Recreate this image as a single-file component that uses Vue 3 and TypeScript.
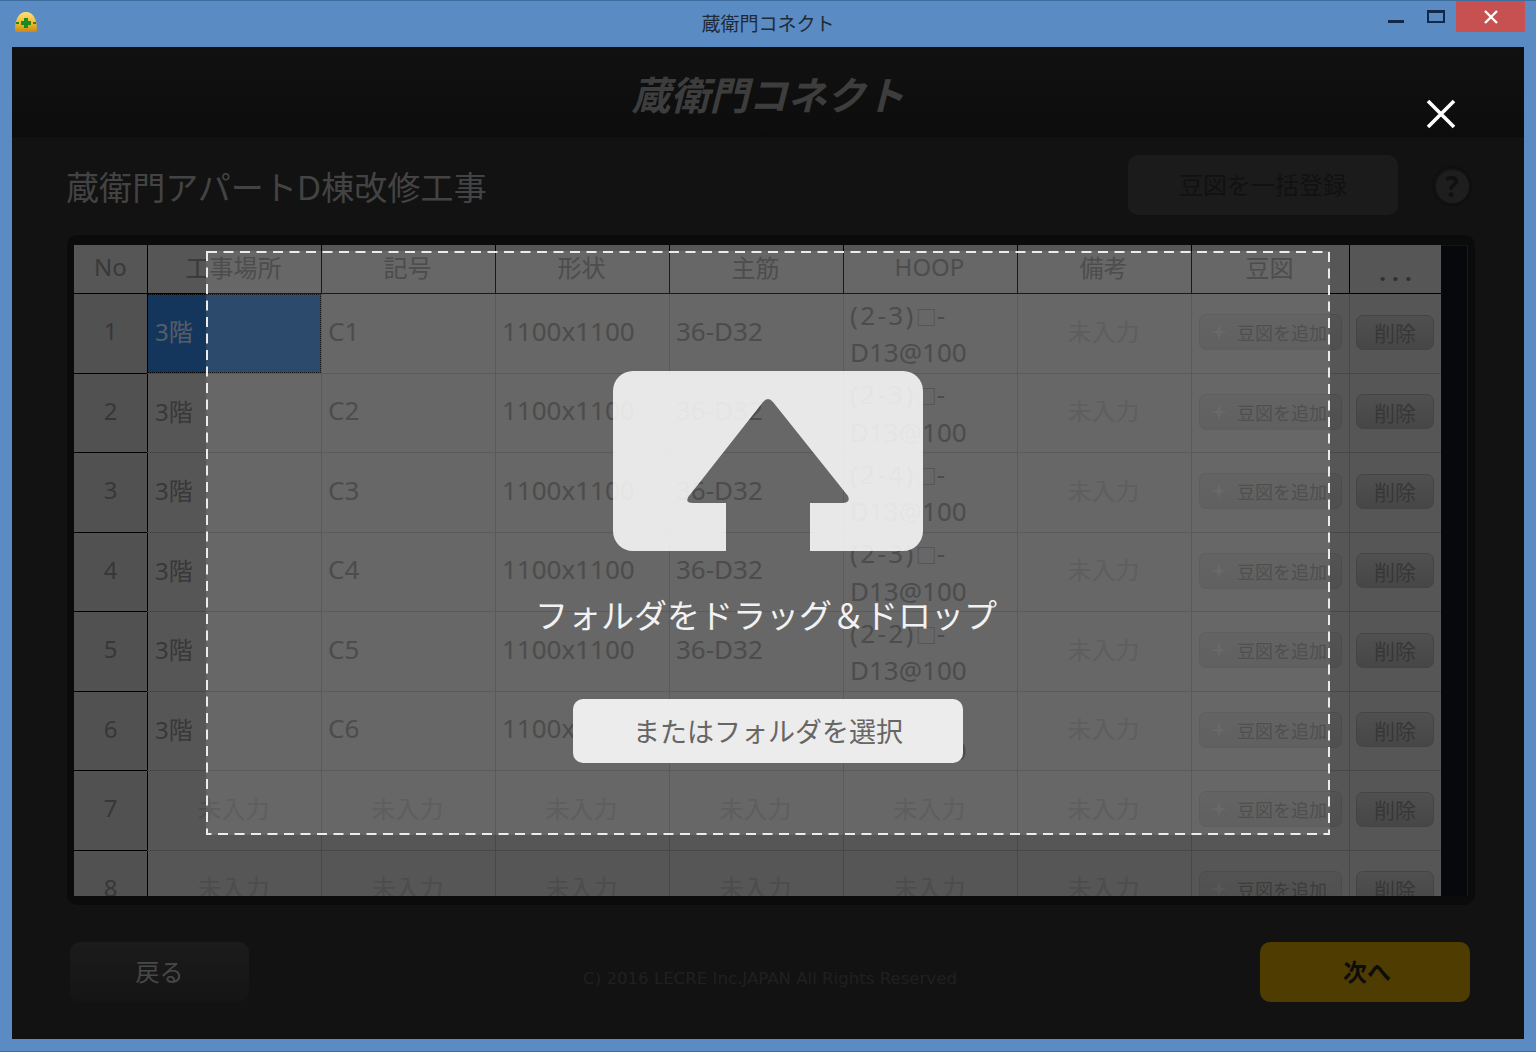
<script setup lang="ts">
interface Row {
  no: number
  place: string
  mark: string
  shape: string
  bar: string
  hoop: string
  tie: string
}

const headers: string[] = ['No', '工事場所', '記号', '形状', '主筋', 'HOOP', '備考', '豆図', '. . .']

const rows: Row[] = [
  { no: 1, place: '3階', mark: 'C1', shape: '1100x1100', bar: '36-D32', hoop: '(2-3)', tie: 'D13@100' },
  { no: 2, place: '3階', mark: 'C2', shape: '1100x1100', bar: '36-D32', hoop: '(2-3)', tie: 'D13@100' },
  { no: 3, place: '3階', mark: 'C3', shape: '1100x1100', bar: '36-D32', hoop: '(2-4)', tie: 'D13@100' },
  { no: 4, place: '3階', mark: 'C4', shape: '1100x1100', bar: '36-D32', hoop: '(2-3)', tie: 'D13@100' },
  { no: 5, place: '3階', mark: 'C5', shape: '1100x1100', bar: '36-D32', hoop: '(2-2)', tie: 'D13@100' },
  { no: 6, place: '3階', mark: 'C6', shape: '1100x1100', bar: '36-D32', hoop: '(2-2)', tie: 'D13@100' },
  { no: 7, place: '', mark: '', shape: '', bar: '', hoop: '', tie: '' },
  { no: 8, place: '', mark: '', shape: '', bar: '', hoop: '', tie: '' },
]
</script>

<template>
  <div class="window">
    <header class="titlebar">
      <svg class="helmet" width="24" height="22" viewBox="0 0 24 22">
        <defs>
          <linearGradient id="hat" x1="0" y1="0" x2="0" y2="1">
            <stop offset="0" stop-color="#ffe27a" />
            <stop offset="0.55" stop-color="#f4b92c" />
            <stop offset="1" stop-color="#c98a12" />
          </linearGradient>
        </defs>
        <path d="M1 19 C1 8 5 1 12 1 C19 1 23 8 23 19 Q23 21 21 21 H3 Q1 21 1 19 Z" fill="url(#hat)" />
        <path d="M10 7 H14 V10 H17 V14 H14 V17 H10 V14 H7 V10 H10 Z" fill="#1d8a1d" />
        <rect x="2" y="11" width="3" height="2" fill="#1d8a1d" />
        <rect x="19" y="11" width="3" height="2" fill="#1d8a1d" />
      </svg>
      <div class="win-title">蔵衛門コネクト</div>
      <div class="win-controls">
        <span class="win-min"></span>
        <span class="win-max"></span>
        <span class="win-close">
          <svg width="16" height="14" viewBox="0 0 16 14">
            <path d="M2 1 L14 13 M14 1 L2 13" stroke="#fff" stroke-width="2.4" fill="none" />
          </svg>
        </span>
      </div>
    </header>

    <main class="app">
      <div class="brand"><span class="logo">蔵衛門コネクト</span></div>

      <div class="toolbar">
        <h1 class="project">蔵衛門アパートD棟改修工事</h1>
        <button class="bulk">豆図を一括登録</button>
        <span class="help"><span class="help-in">?</span></span>
      </div>

      <section class="panel">
        <div class="grid">
          <div class="row head">
            <div v-for="h in headers" :key="h" class="cell hcell" :class="{ first: h === 'No', dots: h === '. . .' }">{{ h }}</div>
          </div>
          <div v-for="r in rows" :key="r.no" class="row body">
            <div class="cell nocell">{{ r.no }}</div>
            <div class="cell" :class="[r.place ? 'text cjk' : 'empty', { selected: r.no === 1 }]">{{ r.place || '未入力' }}</div>
            <div class="cell" :class="r.mark ? 'text' : 'empty'">{{ r.mark || '未入力' }}</div>
            <div class="cell" :class="r.shape ? 'text' : 'empty'">{{ r.shape || '未入力' }}</div>
            <div class="cell" :class="r.bar ? 'text' : 'empty'">{{ r.bar || '未入力' }}</div>
            <div v-if="r.hoop" class="cell text hoop">
              <span class="hoop-line"><span class="hoop-code">{{ r.hoop }}</span><span class="hoop-box">□</span>-</span>
              <span class="hoop-line">{{ r.tie }}</span>
            </div>
            <div v-else class="cell empty">未入力</div>
            <div class="cell empty">未入力</div>
            <div class="cell btncell">
              <button class="add">
                <svg width="18" height="18" viewBox="0 0 18 18">
                  <path d="M9 1 L10.6 7.4 L17 9 L10.6 10.6 L9 17 L7.4 10.6 L1 9 L7.4 7.4 Z" fill="#dcdcdc" />
                </svg>
                <span>豆図を追加</span>
              </button>
            </div>
            <div class="cell btncell">
              <button class="del">削除</button>
            </div>
          </div>
        </div>
        <div class="gutter"></div>
      </section>

      <footer class="foot">
        <button class="back">戻る</button>
        <div class="copy">C) 2016 LECRE Inc.JAPAN All Rights Reserved</div>
        <button class="next">次へ</button>
      </footer>

      <div class="overlay">
        <svg class="close" width="32" height="32" viewBox="0 0 32 32">
          <path d="M3 3 L29 29 M29 3 L3 29" stroke="#fff" stroke-width="3.6" fill="none" />
        </svg>
        <div class="drop">
          <svg class="dash" width="1124" height="584" viewBox="0 0 1124 584">
            <rect x="1" y="1" width="1122" height="582" fill="none" stroke="#ececec" stroke-width="2" stroke-dasharray="10 6.5" />
          </svg>
          <svg class="card" width="310" height="180" viewBox="0 0 310 180">
            <path
              d="M20 0 H290 A20 20 0 0 1 310 20 V160 A20 20 0 0 1 290 180 H197 V132 H229 Q238 132 235 125 L160 31 Q155 25 150 31 L76 125 Q71 132 80 132 H113 V180 H20 A20 20 0 0 1 0 160 V20 A20 20 0 0 1 20 0 Z"
              fill="rgba(255,255,255,0.85)"
            />
          </svg>
          <p class="drop-text">フォルダをドラッグ＆ドロップ</p>
          <button class="pick">またはフォルダを選択</button>
        </div>
      </div>
    </main>
  </div>
</template>

<style>
html,
body {
  margin: 0;
  background: #5a8bc2;
}
</style>

<style scoped>
* {
  box-sizing: border-box;
}

.window {
  width: 1536px;
  height: 1052px;
  padding: 0 12px 12px;
  background: #5a8bc2;
  border-top: 1px solid #3f6da0;
  border-bottom: 1px solid #3f6da0;
  display: flex;
  flex-direction: column;
  font-family: "Noto Sans", "Noto Sans CJK JP", sans-serif;
  overflow: hidden;
}

button {
  font-family: inherit;
  margin: 0;
  padding: 0;
}

.titlebar {
  height: 46px;
  flex: none;
  display: grid;
  grid-template-columns: 1fr auto 1fr;
  align-items: start;
}

.helmet {
  margin: 10px 0 0 2px;
}

.win-title {
  margin-top: 9px;
  font-size: 19px;
  line-height: 28px;
  color: #1e2a38;
  white-space: nowrap;
}

.win-controls {
  display: flex;
  justify-content: flex-end;
  align-items: flex-start;
  margin-right: -1px;
}

.win-min {
  width: 16px;
  height: 3px;
  margin-top: 19px;
  background: #14294a;
}

.win-max {
  width: 18px;
  height: 13px;
  margin: 9px 11px 0 23px;
  border: 2px solid #14294a;
  border-top-width: 3px;
}

.win-close {
  width: 69px;
  height: 31px;
  background: #c75050;
  display: flex;
  align-items: center;
  justify-content: center;
}

.app {
  position: relative;
  flex: 1;
  background: #2d2d2d;
  display: flex;
  flex-direction: column;
}

.brand {
  height: 90px;
  flex: none;
  background: linear-gradient(#2c2c2c, #202020);
  display: flex;
  justify-content: center;
  align-items: center;
  padding-top: 6px;
}

.logo {
  font-size: 39px;
  font-weight: 700;
  font-style: italic;
  line-height: 44px;
  color: #9a9a9a;
  white-space: nowrap;
}

.toolbar {
  height: 98px;
  flex: none;
  display: flex;
  align-items: center;
  padding: 0 52px 0 54px;
}

.project {
  flex: 1;
  margin: 4px 0 0;
  font-size: 33px;
  font-weight: 400;
  line-height: 44px;
  letter-spacing: 0.1px;
  color: #a8a8a8;
  white-space: nowrap;
}

.bulk {
  width: 270px;
  height: 60px;
  margin-bottom: 3px;
  padding-bottom: 3px;
  border: none;
  border-radius: 10px;
  background: #444;
  font-size: 24px;
  color: #2c2c2c;
}

.help {
  width: 40px;
  height: 40px;
  margin-left: 34px;
  border-radius: 50%;
  background: #303030;
  border: 2px solid #262626;
  display: flex;
  align-items: center;
  justify-content: center;
}

.help-in {
  width: 33px;
  height: 33px;
  border-radius: 50%;
  background: #4c4c4c;
  color: #2a2a2a;
  font-size: 28px;
  font-weight: 700;
  line-height: 33px;
  text-align: center;
}

.panel {
  height: 670px;
  flex: none;
  margin: 0 49px 0 55px;
  padding: 10px 7px 9px;
  border-radius: 10px;
  background: #1c1c1c;
  display: flex;
}

.grid {
  width: 1367px;
  flex: none;
  overflow: hidden;
}

.gutter {
  flex: 1;
  background: #10161e;
  border-top: 1px solid #333;
  border-right: 1px solid #444;
}

.row {
  display: grid;
  grid-template-columns: 73px 174px 174px 174px 174px 174px 174px 158px 92px;
}

.head {
  height: 49px;
  border-bottom: 1px solid #000;
}

.body {
  height: 79.5px;
  border-bottom: 1px solid #b4b4b4;
}

.cell {
  border-left: 1px solid #b4b4b4;
  background: #d6d6d6;
  display: flex;
  align-items: center;
  min-width: 0;
  overflow: hidden;
  white-space: nowrap;
}

.hcell {
  justify-content: center;
  border-left-color: #000;
  font-size: 24px;
  color: #8e8e8e;
  padding: 0 2px 6px 0;
}

.hcell.first {
  border-left: none;
  padding-right: 0;
}

.hcell.dots {
  padding: 4px 0 0;
  font-weight: 700;
  color: #7c7c7c;
}

.nocell {
  justify-content: center;
  border-left: none;
  background: #cbcbcb;
  font-size: 24px;
  color: #8a8a8a;
  box-shadow: 0 1px 0 #000;
  padding-bottom: 5px;
}

.nocell + .cell {
  border-left-color: #000;
}

.text {
  padding: 0 0 5px 6px;
  font-size: 26px;
  color: #8c8c8c;
}

.cjk {
  padding-left: 7px;
  font-size: 24px;
}

.selected {
  background: #3388e6;
  color: #d8e8ff;
  outline: 1px dotted #000;
  outline-offset: -1px;
}

.hoop {
  flex-direction: column;
  align-items: flex-start;
  justify-content: center;
  line-height: 35.5px;
  padding: 2px 0 0 6px;
}

.hoop-line {
  display: block;
}

.hoop-code {
  letter-spacing: 2.4px;
}

.hoop-box {
  font-size: 21px;
  color: #a0a0a0;
}

.empty {
  justify-content: center;
  font-size: 24px;
  color: #bfbfbf;
  padding: 0 2px 6px 0;
}

.btncell {
  justify-content: center;
  padding-bottom: 2px;
}

.add {
  width: 143px;
  height: 36px;
  border: 1px solid #bdbdbd;
  border-radius: 7px;
  background: linear-gradient(#cfcfcf, #c6c6c6);
  display: flex;
  align-items: center;
  gap: 9px;
  padding-left: 10px;
  font-size: 18px;
  color: #969696;
  white-space: nowrap;
}

.del {
  width: 78px;
  height: 35px;
  margin-right: 1px;
  border: 1px solid #aaa;
  border-radius: 7px;
  background: linear-gradient(#c8c8c8, #b0b0b0);
  font-size: 21px;
  color: #8a8a8a;
}

.foot {
  flex: 1;
  display: grid;
  grid-template-columns: 1fr auto 1fr;
  padding: 37px 54px 0 58px;
  align-items: start;
}

.back {
  width: 179px;
  height: 60px;
  padding-bottom: 4px;
  border: none;
  border-radius: 10px;
  background: linear-gradient(#454545, #343434);
  font-size: 24px;
  color: #b4b4b4;
}

.copy {
  margin-top: 27px;
  font-family: "DejaVu Sans", sans-serif;
  font-size: 16.6px;
  line-height: 20px;
  color: #505050;
  white-space: nowrap;
}

.next {
  width: 210px;
  height: 60px;
  padding: 0 0 4px 4px;
  justify-self: end;
  border: none;
  border-radius: 10px;
  background: #c49600;
  font-size: 24px;
  font-weight: 700;
  color: #222;
}

.overlay {
  position: absolute;
  inset: 0;
  background: rgba(0, 0, 0, 0.6);
  display: flex;
  align-items: center;
  justify-content: center;
}

.close {
  position: absolute;
  top: 51px;
  right: 67px;
}

.drop {
  position: relative;
  width: 1124px;
  height: 584px;
  padding-top: 120px;
  background: rgba(255, 255, 255, 0.1);
  display: flex;
  flex-direction: column;
  align-items: center;
}

.dash {
  position: absolute;
  inset: 0;
}

.card {
  flex: none;
}

.drop-text {
  margin: 45px 0 63px;
  padding-right: 4px;
  font-size: 33px;
  line-height: 40px;
  color: #f2f2f2;
  white-space: nowrap;
}

.pick {
  width: 390px;
  height: 64px;
  flex: none;
  padding: 0 0 2px 0;
  border: none;
  border-radius: 10px;
  background: #ececec;
  font-size: 27px;
  color: #666;
}
</style>
